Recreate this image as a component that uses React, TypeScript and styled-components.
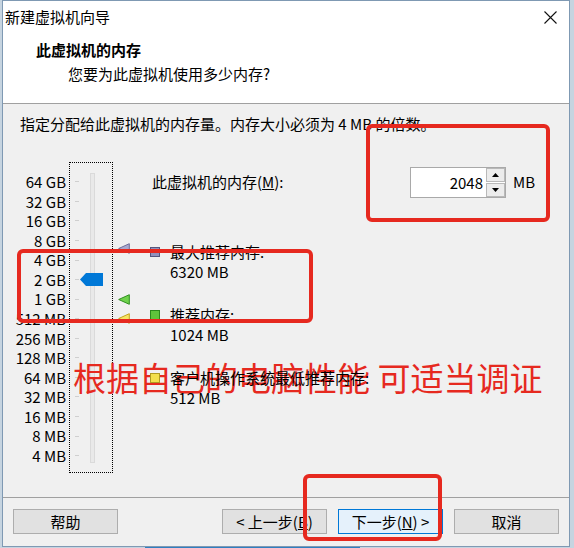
import React from "react";
import styled, { createGlobalStyle } from "styled-components";

const FONT = `"Noto Sans CJK SC", "Noto Sans", sans-serif`;
const ROW = 19.57;
const FIRST = 20; // center of first label row, relative to slider area top
const LAST = FIRST + 14 * ROW;

const yFor = (mb: number) => LAST - Math.log2(mb / 4) * ROW;

const Global = createGlobalStyle`
  html, body { margin: 0; padding: 0; background: #c6d4e0; }
  body { font-family: ${FONT}; color: #000; width: 574px; height: 548px; overflow: hidden; }
`;

const Page = styled.div`
  padding-left: 2px;
`;

const Window = styled.div`
  position: relative;
  box-sizing: border-box;
  width: 568px;
  height: 547px;
  border: 1px solid #7f99b3;
  background: #f0f0f0;
  display: flex;
  flex-direction: column;
`;

const TitleBar = styled.div`
  height: 31px;
  background: #fff;
  display: flex;
  align-items: center;
  justify-content: space-between;
  padding: 0 12px 0 2px;
  font-size: 15px;
  line-height: 20px;
`;

const Close = styled.svg`
  width: 13px;
  height: 13px;
  margin-top: 1px;
`;

const Header = styled.div`
  height: 71px;
  background: #fff;
  border-bottom: 1px solid #a0a0a0;
  display: flex;
  flex-direction: column;
`;

const Heading = styled.div`
  margin-top: 8px;
  padding-left: 33px;
  font-size: 15px;
  font-weight: 700;
  line-height: 20px;
`;

const Sub = styled.div`
  margin-top: 4px;
  padding-left: 65px;
  font-size: 15px;
  line-height: 20px;
`;

const Body = styled.div`
  height: 383px;
  padding: 10px 0 0 17px;
  font-size: 15px;
  line-height: 20px;
  border-bottom: 1px solid #a0a0a0;
`;

const Instruction = styled.div`
  line-height: 20px;
  white-space: nowrap;
`;

const Main = styled.div`
  margin-top: 28px;
  display: flex;
`;

const LabelsCol = styled.div`
  width: 46px;
  padding: 10px 3px 0 0;
  display: flex;
  flex-direction: column;
  align-items: flex-end;
`;

const Label = styled.div`
  height: ${ROW}px;
  line-height: ${ROW}px;
  white-space: nowrap;
  font-size: 15px;
`;

const SliderBox = styled.div`
  position: relative;
  box-sizing: border-box;
  width: 44px;
  height: 311px;
  border: 1px dotted #000;
  display: flex;
`;

const TickCol = styled.div`
  margin-left: 5px;
  width: 4px;
  padding-top: 9px;
  display: flex;
  flex-direction: column;
`;

const Tick = styled.div`
  height: ${ROW}px;
  display: flex;
  align-items: center;
  &::after {
    content: "";
    width: 4px;
    height: 1px;
    background: #cfcfcf;
  }
`;

const Track = styled.div`
  margin-left: 11px;
  margin-top: 10px;
  width: 5px;
  height: 290px;
  box-sizing: border-box;
  background: #e9e9e9;
  border: 1px solid #dadada;
`;

const Thumb = styled.svg`
  position: absolute;
  left: 10px;
  width: 23px;
  height: 13px;
`;

const MarkerCol = styled.div`
  position: relative;
  width: 37px;
`;

const Marker = styled.svg`
  position: absolute;
  left: 5px;
  width: 12px;
  height: 11px;
`;

const RightCol = styled.div`
  position: relative;
  z-index: 2;
  padding-top: 4px;
  display: flex;
  flex-direction: column;
`;

const MemoryRow = styled.div`
  height: 32px;
  display: flex;
  align-items: center;
`;

const MemLabel = styled.div`
  flex: 0 0 258px;
  padding-left: 2px;
  white-space: nowrap;
`;

const Spin = styled.div`
  width: 96px;
  height: 31px;
  box-sizing: border-box;
  border: 1px solid #a9a9a9;
  background: #fff;
  display: flex;
`;

const SpinValue = styled.div`
  flex: 1;
  text-align: right;
  padding-right: 3px;
  line-height: 29px;
`;

const SpinButtons = styled.div`
  width: 19px;
  display: flex;
  flex-direction: column;
  gap: 1px;
`;

const SpinBtn = styled.div`
  flex: 1;
  background: #ececec;
  border: 1px solid #b9b9b9;
  display: flex;
  align-items: center;
  justify-content: center;
`;

const Unit = styled.div`
  margin-left: 7px;
`;

const Legend = styled.div`
  margin-top: 44px;
  display: flex;
  flex-direction: column;
  gap: 24px;
`;

const Entry = styled.div`
  display: flex;
  align-items: flex-start;
  line-height: 19.5px;
`;

const Swatch = styled.div<{ $fill: string; $line: string }>`
  width: 10px;
  height: 10px;
  box-sizing: border-box;
  margin-top: 5px;
  margin-right: 10px;
  background: ${(p) => p.$fill};
  border: 1px solid ${(p) => p.$line};
`;

const Footer = styled.div`
  flex: 1;
  padding: 11px 10px 0 10px;
  display: flex;
  justify-content: space-between;
  align-items: flex-start;
`;

const Group = styled.div`
  display: flex;
  gap: 11px;
`;

const Button = styled.div<{ $primary?: boolean }>`
  width: 105px;
  height: 25px;
  box-sizing: border-box;
  border: 1px solid ${(p) => (p.$primary ? "#0078d7" : "#adadad")};
  background: ${(p) => (p.$primary ? "#e5f1fb" : "#e1e1e1")};
  font-size: 15px;
  line-height: 23px;
  text-align: center;
  white-space: nowrap;
`;

const RedBox = styled.div`
  position: absolute;
  box-sizing: border-box;
  border: 4px solid #e6291f;
  border-radius: 6px;
  z-index: 3;
`;

const RedText = styled.div`
  position: absolute;
  left: 70px;
  top: 360px;
  font-size: 33px;
  line-height: 33px;
  color: #e6291f;
  white-space: nowrap;
  z-index: 1;
`;

const Taskbar = styled.div`
  margin-left: 143px;
  width: 215px;
  height: 1px;
  background: #2f7fc0;
`;

const labels = [
  "64 GB", "32 GB", "16 GB", "8 GB", "4 GB", "2 GB", "1 GB", "512 MB",
  "256 MB", "128 MB", "64 MB", "32 MB", "16 MB", "8 MB", "4 MB",
];

const markers = [
  { mb: 6320, fill: "#a9a9cf", line: "#6d6d99" },
  { mb: 1024, fill: "#6fd24c", line: "#2e8f1e" },
  { mb: 512, fill: "#f7e463", line: "#c3a31c" },
];

const legend = [
  { title: "最大推荐内存:", value: "6320 MB", fill: "#9192bd", line: "#55567d" },
  { title: "推荐内存:", value: "1024 MB", fill: "#5fc53b", line: "#2b8a1c" },
  { title: "客户机操作系统最低推荐内存:", value: "512 MB", fill: "#f3e04c", line: "#b09a20" },
];

export default function App() {
  const value = 2048;
  return (
    <Page>
      <Global />
      <Window>
        <TitleBar>
          <span>新建虚拟机向导</span>
          <Close viewBox="0 0 13 13">
            <path d="M0.5 0.5 L12.5 12.5 M12.5 0.5 L0.5 12.5" stroke="#111" strokeWidth="1.1" />
          </Close>
        </TitleBar>
        <Header>
          <Heading>此虚拟机的内存</Heading>
          <Sub>您要为此虚拟机使用多少内存?</Sub>
        </Header>
        <Body>
          <Instruction>指定分配给此虚拟机的内存量。内存大小必须为 4 MB 的倍数。</Instruction>
          <Main>
            <LabelsCol>
              {labels.map((l) => (
                <Label key={l}>{l}</Label>
              ))}
            </LabelsCol>
            <SliderBox>
              <TickCol>
                {labels.map((l) => (
                  <Tick key={l} />
                ))}
              </TickCol>
              <Track />
              <Thumb viewBox="0 0 23 13" style={{ top: yFor(value) - 1 - 6.5 }}>
                <path d="M0 6.5 L6 0 L23 0 L23 13 L6 13 Z" fill="#0078d7" />
              </Thumb>
            </SliderBox>
            <MarkerCol>
              {markers.map((m) => (
                <Marker key={m.mb} viewBox="0 0 12 11" style={{ top: yFor(m.mb) - 5.5 }}>
                  <path d="M0.7 5.5 L11.3 0.7 L11.3 10.3 Z" fill={m.fill} stroke={m.line} strokeWidth="1" />
                </Marker>
              ))}
            </MarkerCol>
            <RightCol>
              <MemoryRow>
                <MemLabel>
                  此虚拟机的内存(<u>M</u>):
                </MemLabel>
                <Spin>
                  <SpinValue>{value}</SpinValue>
                  <SpinButtons>
                    <SpinBtn>
                      <svg width="7" height="4" viewBox="0 0 7 4">
                        <path d="M0 4 L3.5 0 L7 4 Z" fill="#000" />
                      </svg>
                    </SpinBtn>
                    <SpinBtn>
                      <svg width="7" height="4" viewBox="0 0 7 4">
                        <path d="M0 0 L7 0 L3.5 4 Z" fill="#000" />
                      </svg>
                    </SpinBtn>
                  </SpinButtons>
                </Spin>
                <Unit>MB</Unit>
              </MemoryRow>
              <Legend>
                {legend.map((e) => (
                  <Entry key={e.title}>
                    <Swatch $fill={e.fill} $line={e.line} />
                    <div>
                      <div>{e.title}</div>
                      <div>{e.value}</div>
                    </div>
                  </Entry>
                ))}
              </Legend>
            </RightCol>
          </Main>
        </Body>
        <Footer>
          <Button>帮助</Button>
          <Group>
            <Button>&lt; 上一步(<u>B</u>)</Button>
            <Button $primary>
              下一步(<u>N</u>) &gt;
            </Button>
            <Button>取消</Button>
          </Group>
        </Footer>
        <RedText>根据自己的电脑性能 可适当调证</RedText>
        <RedBox style={{ left: 363, top: 123, width: 184, height: 98 }} />
        <RedBox style={{ left: 14, top: 248, width: 296, height: 74 }} />
        <RedBox style={{ left: 300, top: 473, width: 139, height: 67 }} />
      </Window>
      <Taskbar />
    </Page>
  );
}
